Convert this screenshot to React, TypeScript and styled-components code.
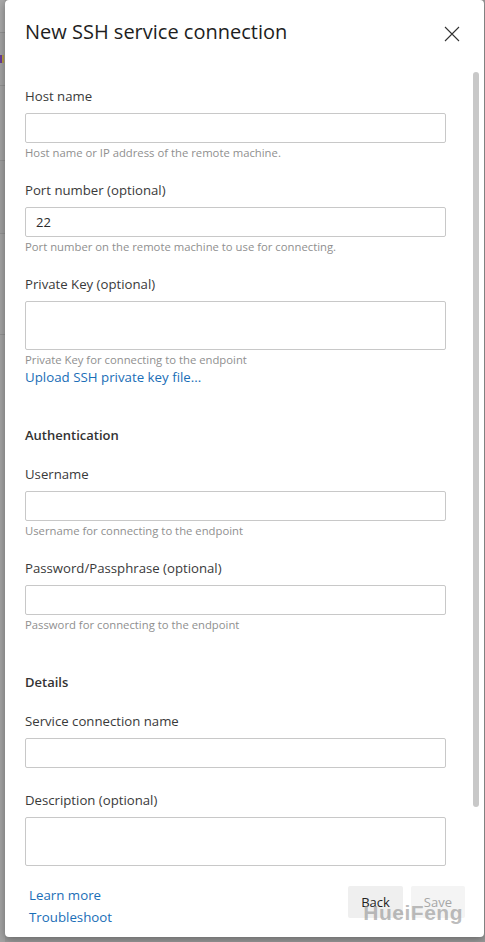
import React from 'react';
import styled, { createGlobalStyle } from 'styled-components';

const GlobalStyle = createGlobalStyle`
  html, body {
    margin: 0;
    padding: 0;
    background: #9a9a9a;
    font-family: 'Open Sans', 'Noto Sans', sans-serif;
  }
`;

const Shell = styled.div`
  display: flex;
  align-items: flex-start;
  height: 942px;
  overflow: hidden;
`;

// strip of the dimmed page that lies behind the panel
const Backdrop = styled.div`
  width: 5px;
  flex: none;
  height: 942px;
  background: #a4a4a4;
  display: flex;
  flex-direction: column;
`;

const BackdropRow = styled.div<{ $h: number; $tone?: string }>`
  height: ${(p) => p.$h}px;
  flex: none;
  border-bottom: 1px solid #939393;
  background: ${(p) => p.$tone || 'transparent'};
  display: flex;
  align-items: center;
`;

const BackdropMark = styled.span<{ $color: string }>`
  width: 2px;
  height: 8px;
  background: ${(p) => p.$color};
`;

const Panel = styled.div`
  position: relative;
  width: 479px;
  height: 937px;
  flex: none;
  background: #ffffff;
  border-radius: 4px;
  box-shadow: 0 2px 8px rgba(0, 0, 0, 0.35);
  display: flex;
  flex-direction: column;
  overflow: hidden;
`;

const Header = styled.div`
  display: flex;
  align-items: center;
  justify-content: space-between;
  padding: 18px 24px 0 20px;
`;

const Title = styled.h1`
  margin: 0;
  font-size: 20px;
  line-height: 28px;
  font-weight: 500;
  color: #1e1e1e;
`;

const CloseButton = styled.button`
  border: none;
  background: none;
  padding: 0;
  margin-top: 3px;
  width: 16px;
  height: 16px;
  display: flex;
  color: #333;
  cursor: pointer;
`;

const Body = styled.div`
  flex: 1;
  padding: 40px 38px 0 20px;
  overflow: hidden;
`;

const Field = styled.div<{ $bottom?: number }>`
  display: flex;
  flex-direction: column;
  padding-bottom: ${(p) => p.$bottom ?? 19}px;
`;

const Label = styled.label`
  font-size: 13.2px;
  line-height: 20px;
  color: #3a3a3a;
  margin-bottom: 7px;
`;

const Input = styled.input`
  box-sizing: border-box;
  height: 30px;
  width: 100%;
  border: 1px solid #c8c8c8;
  border-radius: 2px;
  padding: 0 10px;
  font-family: inherit;
  font-size: 13px;
  color: #2b2b2b;
  outline: none;
`;

const TextArea = styled.textarea`
  box-sizing: border-box;
  height: 49px;
  width: 100%;
  border: 1px solid #c8c8c8;
  border-radius: 2px;
  padding: 6px 10px;
  font-family: inherit;
  font-size: 13px;
  resize: none;
  outline: none;
  display: block;
`;

const Help = styled.div`
  margin-top: 2px;
  font-size: 11.3px;
  line-height: 16px;
  color: #8f8f8f;
`;

const LinkText = styled.a<{ $lh?: number }>`
  font-size: 13.3px;
  line-height: ${(p) => p.$lh ?? 18}px;
  color: #1a6eb7;
  text-decoration: none;
  cursor: pointer;
`;

const SectionTitle = styled.div`
  margin-top: 20px;
  margin-bottom: 19px;
  font-size: 13px;
  line-height: 20px;
  font-weight: 600;
  color: #333;
`;

const Footer = styled.div`
  display: flex;
  justify-content: space-between;
  align-items: flex-start;
  padding: 0 19px 9px 24px;
`;

const FooterLinks = styled.div`
  display: flex;
  flex-direction: column;
`;

const ButtonRow = styled.div`
  display: flex;
  gap: 8px;
  margin-top: 2px;
`;

const Button = styled.button<{ $disabled?: boolean }>`
  height: 32px;
  padding: 0 13px;
  border: none;
  border-radius: 2px;
  font-family: inherit;
  font-size: 13px;
  background: ${(p) => (p.$disabled ? '#f4f4f4' : '#efefef')};
  color: ${(p) => (p.$disabled ? '#a6a6a6' : '#222')};
  cursor: ${(p) => (p.$disabled ? 'default' : 'pointer')};
`;

const Scrollbar = styled.div`
  position: absolute;
  right: 5px;
  top: 72px;
  width: 6px;
  height: 735px;
  border-radius: 3px;
  background: #c8c8c8;
`;

const Watermark = styled.div`
  position: absolute;
  right: 21px;
  bottom: 12px;
  font-family: 'Liberation Sans', Arial, sans-serif;
  font-weight: bold;
  font-size: 21px;
  letter-spacing: 0.5px;
  color: rgba(150, 150, 150, 0.65);
  pointer-events: none;
`;

type FieldProps = {
  label: string;
  help?: string;
  multiline?: boolean;
  value?: string;
  bottom?: number;
  children?: React.ReactNode;
};

const FormField = ({ label, help, multiline, value, bottom, children }: FieldProps) => (
  <Field $bottom={bottom}>
    <Label>{label}</Label>
    {multiline ? <TextArea defaultValue={value} /> : <Input defaultValue={value} />}
    {help && <Help>{help}</Help>}
    {children}
  </Field>
);

const App = () => (
  <>
    <GlobalStyle />
    <Shell>
      <Backdrop>
        <BackdropRow $h={32} $tone="#a9a9a9" />
        <BackdropRow $h={52}>
          <BackdropMark $color="#6a3d9a" />
          <BackdropMark $color="#b8a24a" />
        </BackdropRow>
        <BackdropRow $h={74} />
        <BackdropRow $h={72} $tone="#a0a0a0" />
        <BackdropRow $h={100} />
      </Backdrop>
      <Panel>
        <Header>
          <Title>New SSH service connection</Title>
          <CloseButton aria-label="Close">
            <svg width="16" height="16" viewBox="0 0 16 16">
              <path d="M1 1 L15 15 M15 1 L1 15" stroke="currentColor" strokeWidth="1.1" fill="none" />
            </svg>
          </CloseButton>
        </Header>

        <Body>
          <FormField label="Host name" help="Host name or IP address of the remote machine." />
          <FormField
            label="Port number (optional)"
            value="22"
            help="Port number on the remote machine to use for connecting."
          />
          <FormField label="Private Key (optional)" multiline help="Private Key for connecting to the endpoint">
            <LinkText>Upload SSH private key file...</LinkText>
          </FormField>

          <SectionTitle>Authentication</SectionTitle>
          <FormField label="Username" help="Username for connecting to the endpoint" />
          <FormField label="Password/Passphrase (optional)" help="Password for connecting to the endpoint" />

          <SectionTitle>Details</SectionTitle>
          <FormField label="Service connection name" bottom={22} />
          <FormField label="Description (optional)" multiline bottom={0} />
        </Body>

        <Footer>
          <FooterLinks>
            <LinkText $lh={22}>Learn more</LinkText>
            <LinkText $lh={22}>Troubleshoot</LinkText>
          </FooterLinks>
          <ButtonRow>
            <Button>Back</Button>
            <Button $disabled disabled>
              Save
            </Button>
          </ButtonRow>
        </Footer>

        <Scrollbar />
        <Watermark>HueiFeng</Watermark>
      </Panel>
    </Shell>
  </>
);

export default App;
